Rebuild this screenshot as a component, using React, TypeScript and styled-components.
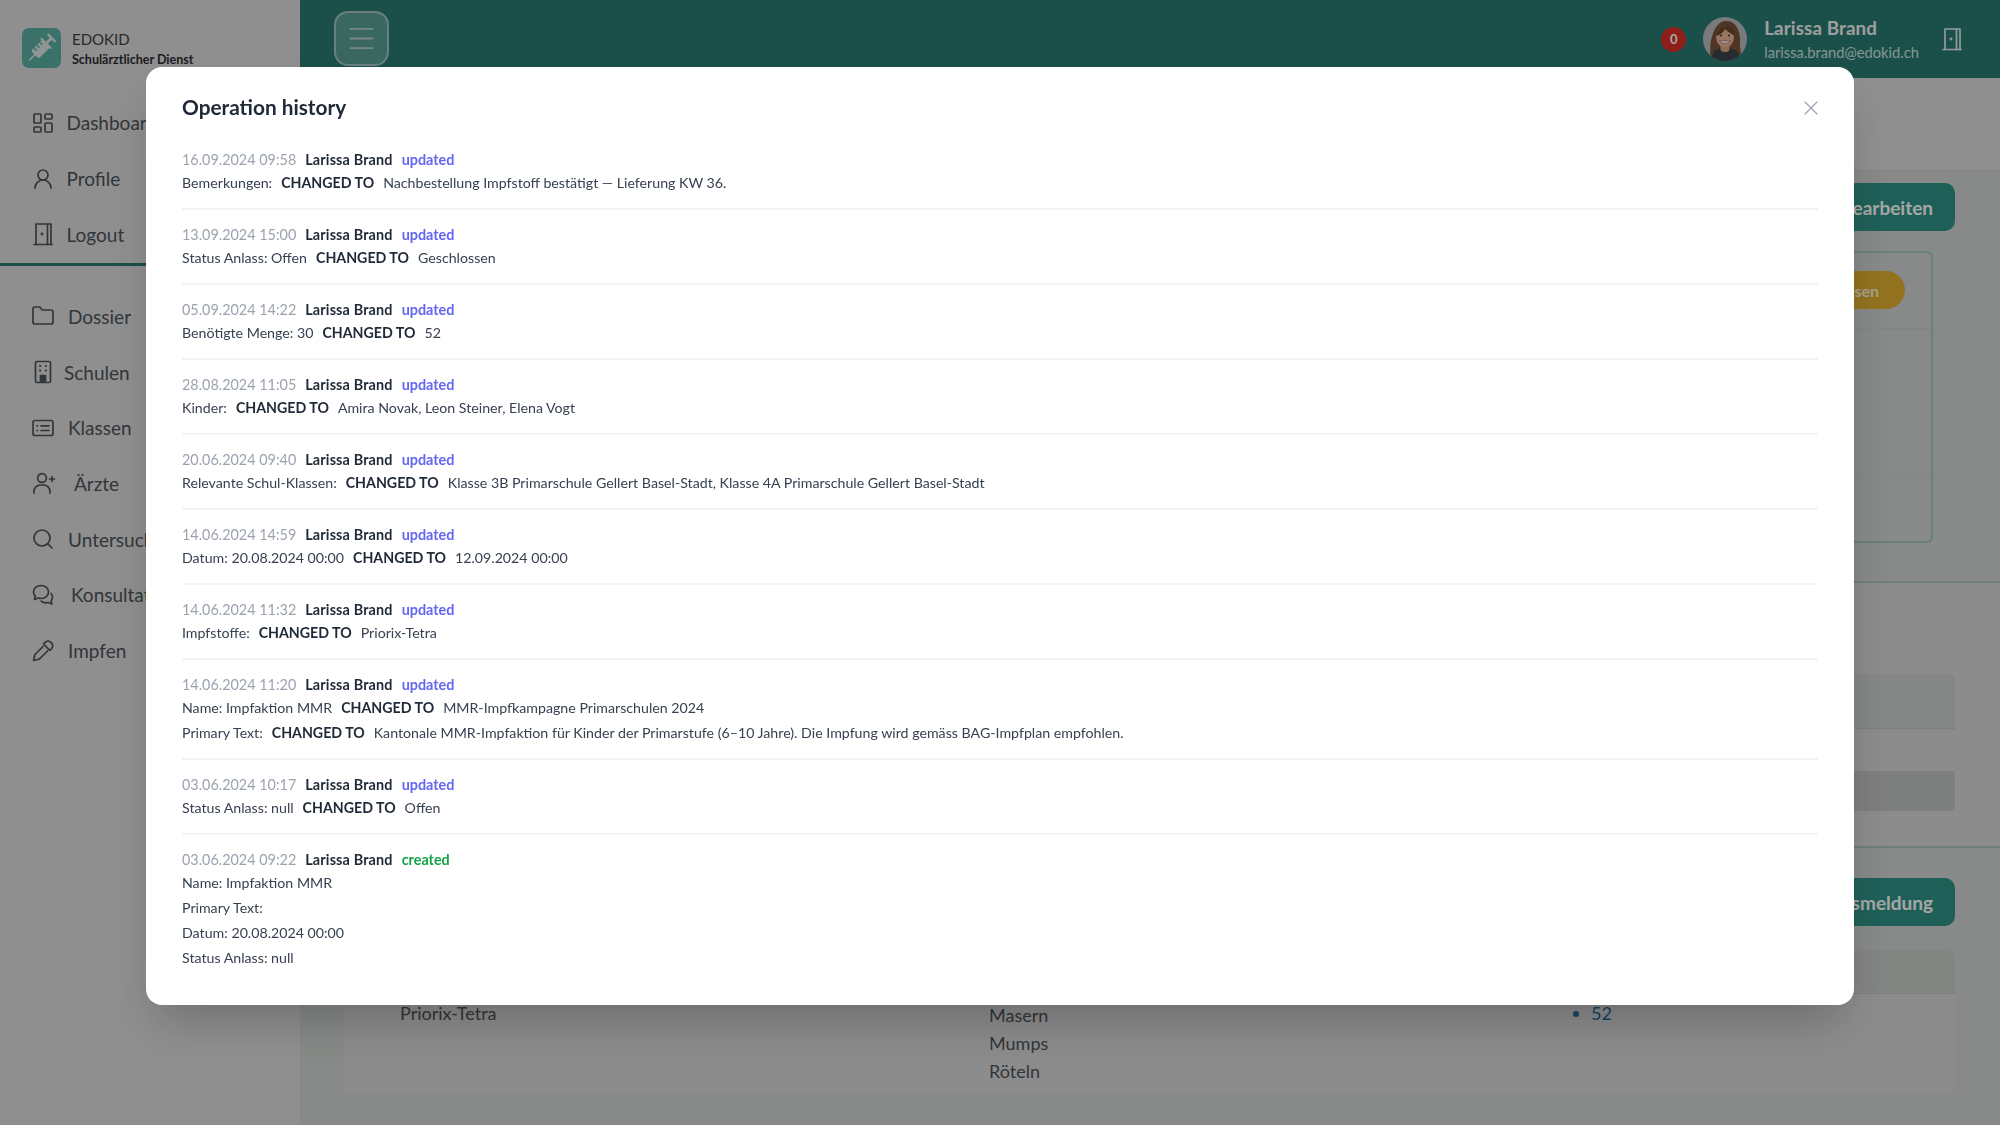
import React from "react";
import styled, { createGlobalStyle } from "styled-components";
import { LayoutDashboard, UserRound, Folder, Search, X, Menu } from "lucide-react";

const Global = createGlobalStyle`
  html, body { margin: 0; padding: 0; background: #d0d4d1; }
  body { font-family: "Lato", "Open Sans", sans-serif; color: #1f2937; }
  * { box-sizing: border-box; }
`;

const Screen = styled.div`
  width: 2000px;
  height: 1125px;
  display: flex;
  overflow: hidden;
`;

/* ---------- sidebar ---------- */
const Sidebar = styled.aside`
  width: 300px;
  flex: none;
  background: #dcdcdc;
  color: #4d5359;
`;
const Brand = styled.div`
  height: 95px;
  padding: 28px 0 0 22px;
  display: flex;
  gap: 11px;
`;
const LogoTile = styled.div`
  width: 39px;
  height: 40px;
  border-radius: 7px;
  background: #5aaea2;
  display: flex;
`;
const BrandText = styled.div`
  display: flex;
  flex-direction: column;
  padding-top: 1px;
`;
const BrandName = styled.span`
  font-size: 15px;
  line-height: 20px;
  color: #3a4046;
`;
const BrandSub = styled.span`
  font-size: 12.5px;
  line-height: 22px;
  font-weight: 700;
  color: #2a2d30;
`;
const NavGroup = styled.nav<{ $rule?: boolean }>`
  padding: ${(p) => (p.$rule ? "0 0 1px" : "22.5px 0 0")};
  border-bottom: ${(p) => (p.$rule ? "3px solid #2a7a72" : "none")};
`;
const NavItem = styled.div<{ $gap: number }>`
  height: 55.7px;
  display: flex;
  align-items: center;
  gap: ${(p) => p.$gap}px;
  padding-left: 31px;
  font-size: 19px;
  white-space: nowrap;
`;

const Glyph = styled.svg`
  width: 24px;
  height: 24px;
  flex: none;
  fill: none;
  stroke: currentColor;
  stroke-width: 1.7;
  stroke-linecap: round;
  stroke-linejoin: round;
`;

const DoorIcon = () => (
  <Glyph viewBox="0 0 24 24">
    <path d="M3 22.5h18" />
    <path d="M5 22.5V2h11.5v20.5" />
    <path d="M16.5 2h3.5v20.5" />
    <circle cx="11" cy="12" r="0.6" />
  </Glyph>
);
const SchoolIcon = () => (
  <Glyph viewBox="0 0 24 24">
    <rect x="4.5" y="1.5" width="15" height="21" rx="1.5" />
    <path d="M9 6h.3M14.700 6h.3M9 10.500h.3M14.700 10.500h.3" strokeWidth="2" />
    <path d="M9.500 22v-6.500h5V22z" fill="currentColor" />
  </Glyph>
);
const ListCardIcon = () => (
  <Glyph viewBox="0 0 24 24">
    <rect x="2" y="4.5" width="20" height="15" rx="2" />
    <path d="M6 9.8h.4M6 14.5h.4M10 9.8h8M10 14.5h8" />
  </Glyph>
);
const UserAddIcon = () => (
  <Glyph viewBox="0 0 24 24" style={{ width: 26 }}>
    <circle cx="10" cy="7" r="4.4" />
    <path d="M2 22v-1.5a6.5 6.5 0 0 1 6.5-6.5h3a6.5 6.5 0 0 1 6.5 6.5V22" />
    <path d="M20 5.5v5M17.5 8h5" />
  </Glyph>
);
const ChatsIcon = () => (
  <Glyph viewBox="0 0 24 24">
    <path d="M10 2.5c4.4 0 7.5 2.8 7.5 6.5s-3.1 6.5-7.5 6.5c-1 0-2-.2-2.9-.5L3.5 16.500l.8-3.500C3 11.800 2.500 10.500 2.500 9c0-3.700 3.100-6.500 7.500-6.500z" />
    <path d="M20 10.500c1 1 1.500 2.200 1.500 3.700 0 1.300-.5 2.500-1.300 3.400l.6 3.400-3.400-1.600c-.8.3-1.700.4-2.600.4-1.900 0-3.500-.6-4.600-1.700" />
  </Glyph>
);
const DropperIcon = () => (
  <Glyph viewBox="0 0 24 24">
    <path d="M13.500 5.500l1.800-1.800a4.500 4.500 0 0 1 6.300 6.300l-1.800 1.800z" transform="translate(-1 -.5)" />
    <path d="M12 7.500L4.500 15c-.6.600-1 1.400-1 2.200L2.500 21.500l4.300-1c.8-.1 1.600-.5 2.200-1l7.500-7.500" />
  </Glyph>
);
const SyringeMark = () => (
  <svg viewBox="0 0 39 40" width="39" height="40">
    <g transform="rotate(-45 19.500 20)" fill="#d9e6e3">
      <rect x="2" y="19.200" width="9" height="1.700" />
      <rect x="10" y="14.500" width="16" height="11" rx="2" />
      <rect x="13.500" y="14.500" width="1.500" height="4" fill="#5aaea2" />
      <rect x="17.500" y="14.500" width="1.500" height="4" fill="#5aaea2" />
      <rect x="21.500" y="14.500" width="1.500" height="4" fill="#5aaea2" />
      <rect x="25" y="12.500" width="2" height="15" rx="1" />
      <rect x="27" y="18.500" width="6" height="3" />
      <rect x="32.500" y="14.500" width="2.500" height="11" rx="1" />
    </g>
  </svg>
);

/* ---------- main ---------- */
const Main = styled.main`
  flex: 1;
  min-width: 0;
  display: flex;
  flex-direction: column;
`;
const TopBar = styled.header`
  height: 78px;
  flex: none;
  background: #2a7a72;
  display: flex;
  align-items: center;
  padding: 0 36px 0 34px;
`;
const MenuButton = styled.div`
  width: 55px;
  height: 55px;
  margin-top: -1px;
  border-radius: 14px;
  border: 2px solid #a3c4bf;
  background: #5aa096;
  color: #b4d2cd;
  display: flex;
  align-items: center;
  justify-content: center;
`;
const Spring = styled.div`
  flex: 1;
`;
const Badge = styled.div`
  width: 25px;
  height: 25px;
  border-radius: 50%;
  background: #dc3128;
  color: #fff;
  font-size: 13px;
  font-weight: 700;
  display: flex;
  align-items: center;
  justify-content: center;
  margin-right: 17px;
`;
const Avatar = styled.svg`
  width: 44px;
  height: 44px;
  border-radius: 50%;
  flex: none;
  margin-right: 17px;
  filter: blur(0.4px);
`;
const UserBlock = styled.div`
  display: flex;
  flex-direction: column;
  padding-top: 2px;
  margin-right: 21px;
`;
const UserName = styled.span`
  font-size: 18.8px;
  line-height: 24px;
  font-weight: 700;
  letter-spacing: 0.1px;
  color: #f2f4f3;
`;
const UserMail = styled.span`
  font-size: 14.700px;
  line-height: 24px;
  color: #cfe6e0;
`;
const HeaderDoor = styled.div`
  color: #e3efec;
  display: flex;
`;
const TitleBand = styled.div`
  height: 91px;
  flex: none;
  background: #dcdcdc;
`;
const SectionA = styled.section`
  height: 412px;
  flex: none;
  padding: 14px 45px 0 44px;
`;
const ActionRow = styled.div`
  display: flex;
  justify-content: flex-end;
`;
const ActionButton = styled.div`
  height: 48px;
  padding: 0 22px;
  border-radius: 10px;
  background: #2f9488;
  color: #fff;
  font-size: 19px;
  font-weight: 700;
  display: flex;
  align-items: center;
`;
const Panel = styled.div`
  margin: 20px 22px 0 0;
  height: 292px;
  border: 2px solid #a0c4be;
  border-radius: 6px;
  display: flex;
  flex-direction: column;
`;
const PanelHead = styled.div`
  height: 76px;
  flex: none;
  padding: 18px 26px 0 0;
  border-bottom: 1px solid #c9cdcb;
  display: flex;
  justify-content: flex-end;
`;
const Pill = styled.div`
  height: 38px;
  padding: 0 26px;
  border-radius: 19px;
  background: #e0b030;
  color: #fff6d8;
  font-size: 16px;
  font-weight: 700;
  display: flex;
  align-items: center;
`;
const PanelBody = styled.div`
  height: 150px;
  flex: none;
  border-bottom: 1px solid #c9cdcb;
`;
const SectionB = styled.section`
  height: 267px;
  flex: none;
  background: #d7d7d7;
  border-top: 2px solid #a9c2bd;
  border-bottom: 2px solid #a9c2bd;
  padding: 91px 45px 0 44px;
`;
const Stripe = styled.div`
  height: 55px;
  background: #cdd0ce;
  border-bottom: 1px solid #c0c2c1;
  border-radius: 6px 6px 0 0;
`;
const DarkRow = styled.div`
  height: 40px;
  margin-top: 42px;
  background: #c2c3c3;
  border-radius: 0 0 6px 6px;
`;
const SectionC = styled.section`
  flex: 1;
  padding: 30px 45px 0 44px;
`;
const Table = styled.div`
  margin-top: 25px;
  border-radius: 6px;
  overflow: hidden;
`;
const TableHead = styled.div`
  height: 43px;
  background: #c9ccca;
  border-bottom: 1px solid #c0c2c1;
`;
const TableRow = styled.div`
  height: 100px;
  background: #d7d7d7;
  display: grid;
  grid-template-columns: 589px 584px 1fr;
  padding: 5px 0 0 56px;
  font-size: 18px;
  line-height: 28px;
  color: #4d5359;
`;
const StackCol = styled.div`
  display: flex;
  flex-direction: column;
  padding-top: 2px;
`;
const Dose = styled.div`
  color: #256a98;
  display: flex;
  align-items: flex-start;
  gap: 12px;
  &::before {
    content: "";
    width: 6px;
    height: 6px;
    margin-top: 12px;
    border-radius: 50%;
    background: #256a98;
  }
`;

/* ---------- modal ---------- */
const Overlay = styled.div`
  position: fixed;
  inset: 0;
  background: rgba(0, 0, 0, 0.35);
  display: flex;
  justify-content: center;
  align-items: flex-start;
  padding-top: 67px;
`;
const Modal = styled.div`
  width: 1708px;
  height: 938px;
  background: #fff;
  border-radius: 16px;
  box-shadow: 0 25px 50px -12px rgba(0, 0, 0, 0.25);
  padding: 23px 36px 0;
`;
const ModalHead = styled.div`
  height: 32px;
  display: flex;
  align-items: center;
  justify-content: space-between;
  margin-bottom: 25px;
`;
const ModalTitle = styled.h2`
  margin: 0;
  font-size: 20.8px;
  font-weight: 700;
  color: #1f2937;
`;
const CloseButton = styled.div`
  color: #9ca3af;
  display: flex;
  margin-right: -5px;
  padding-top: 4px;
`;
const Entry = styled.div<{ $last?: boolean }>`
  padding: 0 0 13px;
  margin-bottom: 12px;
  border-bottom: ${(p) => (p.$last ? "none" : "2px solid #f3f4f6")};
`;
const EntryHead = styled.div`
  height: 24px;
  display: flex;
  align-items: center;
  gap: 9px;
  font-size: 14.4px;
`;
const Stamp = styled.span`
  color: #9ca3af;
`;
const Author = styled.span`
  font-weight: 700;
  letter-spacing: 0.15px;
  color: #1f2937;
`;
const Verb = styled.span<{ $created?: boolean }>`
  font-weight: 700;
  color: ${(p) => (p.$created ? "#16a34a" : "#6366f1")};
`;
const Line = styled.div`
  height: 24px;
  padding-bottom: 2px;
  display: flex;
  align-items: center;
  gap: 9px;
  font-size: 14.2px;
  color: #374151;
  & + & {
    margin-top: 1px;
  }
`;
const Changed = styled.span`
  font-weight: 700;
  color: #1f2937;
`;

type Change = [string, string?];
type Log = { at: string; created?: boolean; lines: Change[] };

const logs: Log[] = [
  { at: "16.09.2024 09:58", lines: [["Bemerkungen:", "Nachbestellung Impfstoff bestätigt — Lieferung KW 36."]] },
  { at: "13.09.2024 15:00", lines: [["Status Anlass: Offen", "Geschlossen"]] },
  { at: "05.09.2024 14:22", lines: [["Benötigte Menge: 30", "52"]] },
  { at: "28.08.2024 11:05", lines: [["Kinder:", "Amira Novak, Leon Steiner, Elena Vogt"]] },
  { at: "20.06.2024 09:40", lines: [["Relevante Schul-Klassen:", "Klasse 3B Primarschule Gellert Basel-Stadt, Klasse 4A Primarschule Gellert Basel-Stadt"]] },
  { at: "14.06.2024 14:59", lines: [["Datum: 20.08.2024 00:00", "12.09.2024 00:00"]] },
  { at: "14.06.2024 11:32", lines: [["Impfstoffe:", "Priorix-Tetra"]] },
  {
    at: "14.06.2024 11:20",
    lines: [
      ["Name: Impfaktion MMR", "MMR-Impfkampagne Primarschulen 2024"],
      ["Primary Text:", "Kantonale MMR-Impfaktion für Kinder der Primarstufe (6–10 Jahre). Die Impfung wird gemäss BAG-Impfplan empfohlen."],
    ],
  },
  { at: "03.06.2024 10:17", lines: [["Status Anlass: null", "Offen"]] },
  {
    at: "03.06.2024 09:22",
    created: true,
    lines: [["Name: Impfaktion MMR"], ["Primary Text:"], ["Datum: 20.08.2024 00:00"], ["Status Anlass: null"]],
  },
];

export default function App() {
  return (
    <>
      <Global />
      <Screen>
        <Sidebar>
          <Brand>
            <LogoTile>
              <SyringeMark />
            </LogoTile>
            <BrandText>
              <BrandName>EDOKID</BrandName>
              <BrandSub>Schulärztlicher Dienst</BrandSub>
            </BrandText>
          </Brand>
          <NavGroup $rule>
            <NavItem $gap={11.5}><LayoutDashboard size={24} strokeWidth={1.7} />Dashboard</NavItem>
            <NavItem $gap={11.5}><UserRound size={24} strokeWidth={1.7} />Profile</NavItem>
            <NavItem $gap={11.5}><DoorIcon />Logout</NavItem>
          </NavGroup>
          <NavGroup>
            <NavItem $gap={13}><Folder size={24} strokeWidth={1.7} />Dossier</NavItem>
            <NavItem $gap={9}><SchoolIcon />Schulen</NavItem>
            <NavItem $gap={13}><ListCardIcon />Klassen</NavItem>
            <NavItem $gap={17}><UserAddIcon />Ärzte</NavItem>
            <NavItem $gap={13}><Search size={24} strokeWidth={1.7} />Untersuchungen</NavItem>
            <NavItem $gap={16}><ChatsIcon />Konsultationen</NavItem>
            <NavItem $gap={13}><DropperIcon />Impfen</NavItem>
          </NavGroup>
        </Sidebar>
        <Main>
          <TopBar>
            <MenuButton><Menu size={33} strokeWidth={1.4} /></MenuButton>
            <Spring />
            <Badge>0</Badge>
            <Avatar viewBox="0 0 44 44">
              <rect width="44" height="44" fill="#b9bcbe" />
              <path d="M8 42C5 28 10 4 23 4c12 0 15 13 14 24 0 6 2 10 1 16H9z" fill="#7a5238" />
              <path d="M10 36c1-3 5-5 12-5s12 2 13 5l2 8H8z" fill="#39424a" />
              <path d="M17.500 27h9v6c-2 3-7 3-9 0z" fill="#d8a384" />
              <ellipse cx="22" cy="20" rx="9" ry="10.500" fill="#e6b697" />
              <path d="M13 19c1-7 6-10 11-10 5 0 7 4 8 10-4-2-8-5-10-7-1 3-5 6-9 7z" fill="#6a452e" />
              <path d="M16.500 23.500c2 4 9 4 11 0-2 .8-9 .8-11 0z" fill="#fff" stroke="#9a4d3c" strokeWidth=".5" />
              <circle cx="18" cy="18.500" r=".9" fill="#33241c" />
              <circle cx="26" cy="18.500" r=".9" fill="#33241c" />
            </Avatar>
            <UserBlock>
              <UserName>Larissa Brand</UserName>
              <UserMail>larissa.brand@edokid.ch</UserMail>
            </UserBlock>
            <HeaderDoor><DoorIcon /></HeaderDoor>
          </TopBar>
          <TitleBand />
          <SectionA>
            <ActionRow><ActionButton>Anlass bearbeiten</ActionButton></ActionRow>
            <Panel>
              <PanelHead><Pill>Anlass schliessen</Pill></PanelHead>
              <PanelBody />
            </Panel>
          </SectionA>
          <SectionB>
            <Stripe />
            <DarkRow />
          </SectionB>
          <SectionC>
            <ActionRow><ActionButton>Bestandsmeldung</ActionButton></ActionRow>
            <Table>
              <TableHead />
              <TableRow>
                <span>Priorix-Tetra</span>
                <StackCol><span>Masern</span><span>Mumps</span><span>Röteln</span></StackCol>
                <Dose>52</Dose>
              </TableRow>
            </Table>
          </SectionC>
        </Main>
      </Screen>
      <Overlay>
        <Modal>
          <ModalHead>
            <ModalTitle>Operation history</ModalTitle>
            <CloseButton><X size={24} strokeWidth={1.2} /></CloseButton>
          </ModalHead>
          {logs.map((log, i) => (
            <Entry key={log.at} $last={i === logs.length - 1}>
              <EntryHead>
                <Stamp>{log.at}</Stamp>
                <Author>Larissa Brand</Author>
                <Verb $created={log.created}>{log.created ? "created" : "updated"}</Verb>
              </EntryHead>
              {log.lines.map(([label, value]) => (
                <Line key={label}>
                  <span>{label}</span>
                  {value && <Changed>CHANGED TO</Changed>}
                  {value && <span>{value}</span>}
                </Line>
              ))}
            </Entry>
          ))}
        </Modal>
      </Overlay>
    </>
  );
}
